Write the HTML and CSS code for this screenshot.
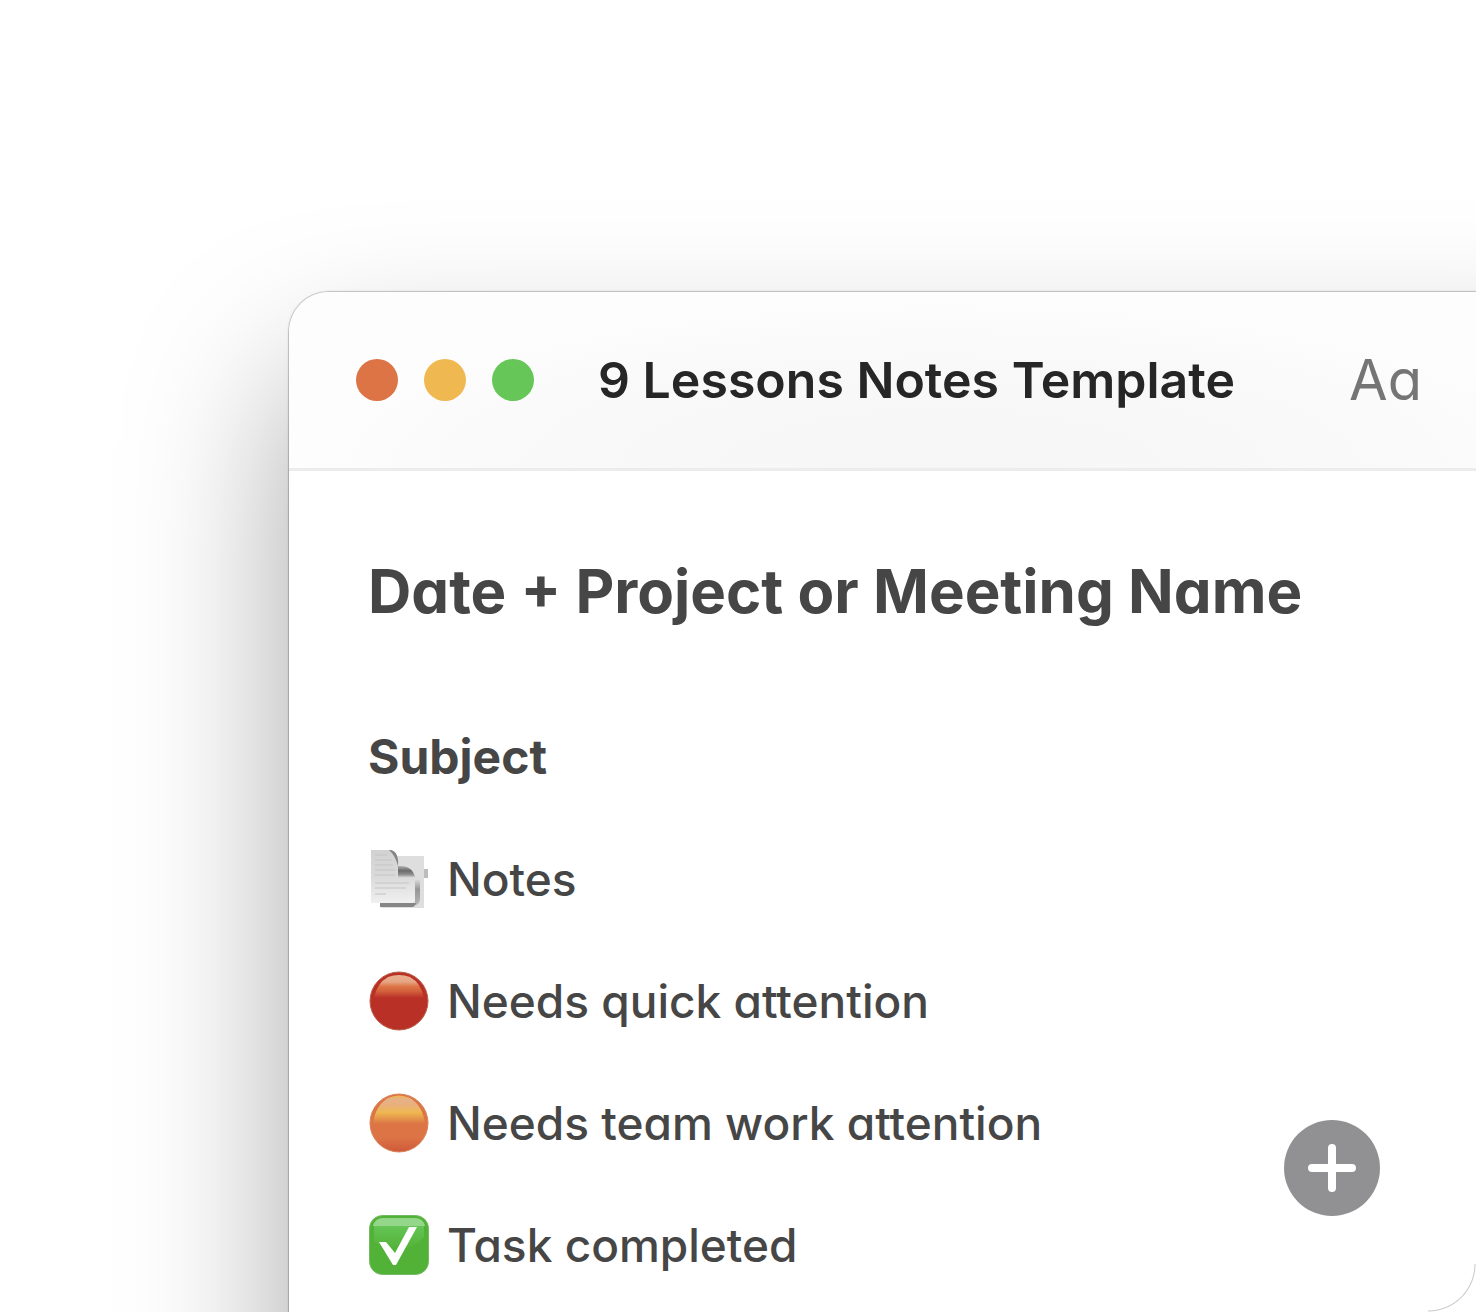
FILE: index.html
```html
<!DOCTYPE html>
<html lang="en">
<head>
<meta charset="utf-8">
<meta name="viewport" content="width=device-width, initial-scale=1">
<title>9 Lessons Notes Template</title>
<link rel="stylesheet" href="styles.css">
</head>
<body>
<div class="stage">
  <main class="window">
    <header class="titlebar">
      <div class="controls">
        <button class="control control-close" type="button" aria-label="Close"></button>
        <button class="control control-minimize" type="button" aria-label="Minimize"></button>
        <button class="control control-zoom" type="button" aria-label="Zoom"></button>
      </div>
      <h1 class="window-title">9 Lessons Notes Template</h1>
      <button class="format" type="button">Aa</button>
    </header>
    <article class="note">
      <h2 class="note-title">Date + Project or Meeting Name</h2>
      <h3 class="note-subject">Subject</h3>
      <ul class="legend">
        <li class="legend-item">
          <svg class="icon" viewBox="0 0 60 60" aria-hidden="true">
            <defs>
              <linearGradient id="paper" x1="0" y1="0" x2="0" y2="1">
                <stop offset="0" stop-color="#d2d2d2"/>
                <stop offset="0.5" stop-color="#dadada"/>
                <stop offset="1" stop-color="#f0f0f0"/>
              </linearGradient>
              <linearGradient id="curl" x1="0" y1="0" x2="0" y2="1">
                <stop offset="0" stop-color="#b0b0b0"/>
                <stop offset="0.4" stop-color="#6a6a6a"/>
                <stop offset="0.7" stop-color="#8c8c8c"/>
                <stop offset="1" stop-color="#e0e0e0"/>
              </linearGradient>
              <linearGradient id="side" x1="0" y1="0" x2="0" y2="1">
                <stop offset="0" stop-color="#dedede"/>
                <stop offset="0.4" stop-color="#969696"/>
                <stop offset="1" stop-color="#b4b4b4"/>
              </linearGradient>
            </defs>
            <path d="M22 7H55V59H12V54H22Z" fill="#dedede"/>
            <path d="M55 20H59V29H55Z" fill="#bcbcbc"/>
            <path d="M46 30H51V50Q50 56 46 56Z" fill="url(#side)"/>
            <path d="M11 54H47Q46 58 43 58H11Z" fill="#868686"/>
            <path d="M2 1H22Q29 3 29 14V27Q38 29 46 26V50Q46 54 42 54H2Z" fill="url(#paper)"/>
            <path d="M22 1Q30 3 29 17Q26 6 20 1Z" fill="#858585"/>
            <path d="M29 17Q43 16 46 28Q38 29 29 29Z" fill="url(#curl)"/>
            <path d="M6 6H18M6 11H23M6 16H24M6 21H26M6 26H26M6 34H40M6 39H37M6 45H17" fill="none" stroke="#c4c4c4"/>
          </svg>
          <span>Notes</span>
        </li>
        <li class="legend-item">
          <svg class="icon" viewBox="0 0 60 60" aria-hidden="true">
            <defs>
              <linearGradient id="red-gloss" x1="0" y1="0" x2="0" y2="1">
                <stop offset="0" stop-color="#e9b091"/>
                <stop offset="0.3" stop-color="#e6a585"/>
                <stop offset="0.5" stop-color="#dc7446"/>
                <stop offset="0.7" stop-color="#d3623c"/>
                <stop offset="1" stop-color="#b93027"/>
              </linearGradient>
            </defs>
            <circle cx="30" cy="30" r="29" fill="#b93027" stroke="#b95f48"/>
            <path d="M5 27Q8 12 19 6Q30 2 41 6Q52 12 55 27Z" fill="url(#red-gloss)"/>
          </svg>
          <span>Needs quick attention</span>
        </li>
        <li class="legend-item">
          <svg class="icon" viewBox="0 0 60 60" aria-hidden="true">
            <defs>
              <linearGradient id="orange-base" x1="0" y1="0" x2="0" y2="1">
                <stop offset="0.75" stop-color="#dc7446"/>
                <stop offset="1" stop-color="#cf5939"/>
              </linearGradient>
              <linearGradient id="orange-gloss" x1="0" y1="0" x2="0" y2="1">
                <stop offset="0" stop-color="#efb850"/>
                <stop offset="0.15" stop-color="#e8b08a"/>
                <stop offset="0.35" stop-color="#e9b27a"/>
                <stop offset="0.6" stop-color="#efb850"/>
                <stop offset="1" stop-color="#dc7446"/>
              </linearGradient>
            </defs>
            <circle cx="30" cy="30" r="29" fill="url(#orange-base)" stroke="#d98458"/>
            <path d="M4 31Q6 13 19 5Q30 0 41 5Q54 13 56 31Z" fill="url(#orange-gloss)"/>
          </svg>
          <span>Needs team work attention</span>
        </li>
        <li class="legend-item">
          <svg class="icon" viewBox="0 0 60 60" aria-hidden="true">
            <defs>
              <linearGradient id="green-gloss" x1="0" y1="0" x2="0" y2="1">
                <stop offset="0" stop-color="#66c657"/>
                <stop offset="1" stop-color="#52b237"/>
              </linearGradient>
            </defs>
            <rect x="0.5" y="0.5" width="59" height="59" rx="13" fill="#52b237" stroke="#74b863"/>
            <path d="M5 10H55V22Q45 34 30 34Q12 34 5 26Z" fill="url(#green-gloss)"/>
            <path d="M4 11Q6 3 14 3H46Q54 3 56 11Z" fill="#95d78a"/>
            <path d="M10 27H17L26 38L40 12H48L27 50H24Z" fill="#fff"/>
          </svg>
          <span>Task completed</span>
        </li>
      </ul>
    </article>
  </main>
  <button class="add" type="button" aria-label="Add">
    <svg class="add-icon" viewBox="0 0 48 48" aria-hidden="true">
      <path d="M24 4V44M4 24H44" fill="none" stroke="#fff" stroke-width="8" stroke-linecap="round"/>
    </svg>
  </button>
</div>
</body>
</html>
```

FILE: styles.css
```css
* {
  box-sizing: border-box;
}

body {
  margin: 0;
  background: #fff;
  color: #464646;
  font-family: Inter, "Liberation Sans", sans-serif;
}

button {
  padding: 0;
  border: 0;
  background: none;
  font: inherit;
}

h1,
h2,
h3,
ul {
  margin: 0;
  padding: 0;
}

.stage {
  position: relative;
  display: flex;
  min-height: 100vh;
  padding: 292px 0 0 289px;
  overflow: hidden;
}

/* hairline round the card's lower right corner */
.stage::after {
  content: "";
  position: absolute;
  right: 0;
  bottom: 0;
  width: 48px;
  height: 48px;
  background: radial-gradient(circle at 0 0, transparent 46px, #c8c8c8 47px, transparent 48px);
}

.window {
  flex: 1;
  margin-right: -160px;
  margin-bottom: -160px;
  padding: 0 160px 160px 0;
  border-top-left-radius: 40px;
  background: #fff;
  box-shadow:
    0 0 0 1px rgba(0, 0, 0, 0.14),
    0 0 3px rgba(0, 0, 0, 0.2),
    0 84px 160px rgba(0, 0, 0, 0.35);
}

.titlebar {
  display: flex;
  align-items: center;
  height: 179px;
  padding: 0 54px 0 67px;
  border-bottom: 3px solid #ececec;
  border-top-left-radius: 40px;
  background: radial-gradient(ellipse at 55% 100%, #f6f6f6, #f9f9f9 45%, #fdfdfd 70%);
}

.controls {
  display: flex;
  gap: 26px;
  margin-right: 64px;
}

.control {
  width: 42px;
  height: 42px;
  border-radius: 50%;
}

.control-close {
  background: #dc7446;
}

.control-minimize {
  background: #efb850;
}

.control-zoom {
  background: #66c657;
}

.window-title {
  flex: 1;
  color: #262626;
  font-size: 50px;
  font-weight: 600;
  line-height: 60px;
  white-space: nowrap;
}

.format {
  color: #757575;
  font-size: 56px;
  line-height: 60px;
  font-feature-settings: "cv11";
}

.note {
  padding: 84px 79px 0;
  font-feature-settings: "cv11";
}

.note-title {
  font-size: 60px;
  font-weight: 700;
  line-height: 72px;
  white-space: nowrap;
}

.note-subject {
  margin-top: 100px;
  font-size: 48px;
  font-weight: 700;
  line-height: 60px;
}

.legend {
  display: grid;
  gap: 62px;
  margin-top: 62px;
  padding-left: 1px;
  list-style: none;
}

.legend-item {
  display: flex;
  align-items: center;
  gap: 18px;
  font-size: 46px;
  font-weight: 450;
  line-height: 60px;
  white-space: nowrap;
}

.icon {
  flex: none;
  width: 60px;
  height: 60px;
}

.add {
  position: absolute;
  right: 96px;
  bottom: 96px;
  display: grid;
  place-items: center;
  width: 96px;
  height: 96px;
  border-radius: 50%;
  background: #919193;
}

.add-icon {
  width: 48px;
  height: 48px;
}
```
